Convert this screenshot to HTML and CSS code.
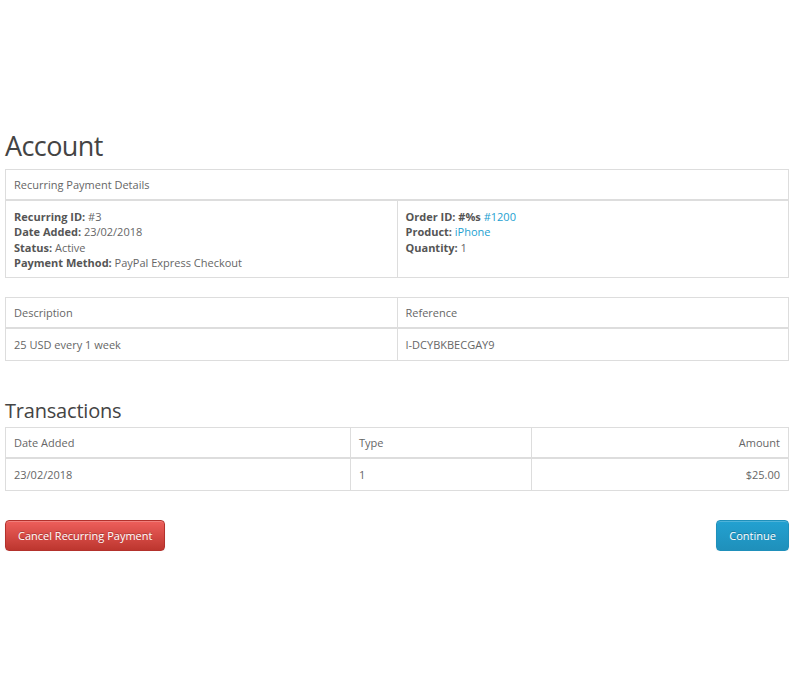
FILE: index.html
```html
<!DOCTYPE html>
<html>
<head>
  <meta http-equiv="content-type" content="text/html; charset=utf-8" />
  <title>Account</title>
  <link rel="stylesheet" href="styles.css">
</head>
<body>
  <div class="container">
    <h1>Account</h1>
    <table class="list first">
      <thead>
        <tr><td colspan="2">Recurring Payment Details</td></tr>
      </thead>
      <tbody>
        <tr class="details">
          <td class="half">
            <b>Recurring ID:</b> #3<br/>
            <b>Date Added:</b> 23/02/2018<br/>
            <b>Status:</b> Active<br/>
            <b>Payment Method:</b> PayPal Express Checkout
          </td>
          <td class="half">
            <b>Order ID: #%s</b> <a href="#">#1200</a><br/>
            <b>Product:</b> <a href="#">iPhone</a><br/>
            <b>Quantity:</b> 1
          </td>
        </tr>
      </tbody>
    </table>

    <table class="list">
      <thead>
        <tr><td class="half">Description</td><td class="half">Reference</td></tr>
      </thead>
      <tbody>
        <tr><td>25 USD every 1 week</td><td>I-DCYBKBECGAY9</td></tr>
      </tbody>
    </table>

    <h2>Transactions</h2>
    <table class="list">
      <thead>
        <tr><td class="c-date">Date Added</td><td class="c-type">Type</td><td class="right">Amount</td></tr>
      </thead>
      <tbody>
        <tr><td>23/02/2018</td><td>1</td><td class="right">$25.00</td></tr>
      </tbody>
    </table>

    <div class="buttons">
      <a href="#" class="btn btn-danger">Cancel Recurring Payment</a>
      <a href="#" class="btn btn-primary">Continue</a>
    </div>
  </div>
</body>
</html>
```

FILE: styles.css
```css
body {
  margin: 0;
  font-family: "Open Sans", sans-serif;
  font-size: 11px;
  color: #666;
  background: #fff;
}
.container {
  width: 784px;
  margin: 0 0 0 5px;
  padding-top: 126px;
}
h1, h2 {
  font-weight: normal;
  color: #444;
  margin: 0;
}
h1 {
  font-size: 27px;
  letter-spacing: -0.6px;
  line-height: 40px;
  margin-bottom: 3px;
}
h2 {
  font-size: 20px;
  letter-spacing: -0.2px;
  line-height: 28px;
  margin-top: 36px;
  margin-bottom: 2px;
}
a {
  color: #23a1d1;
  text-decoration: none;
}
b {
  color: #555;
}
table.list {
  width: 100%;
  border-collapse: collapse;
  margin-bottom: 20px;
  table-layout: fixed;
}
table.list.first {
  margin-bottom: 19px;
}
table.list td {
  border: 1px solid #ddd;
  padding: 7px 8px;
  line-height: 16px;
  vertical-align: top;
}
table.list thead td {
  border-bottom-width: 2px;
  padding-bottom: 6px;
}
table.list tbody td {
  padding: 8px 8px 7px;
  line-height: 16px;
}
table.list tr.details td {
  padding: 8px 8px 7px;
  line-height: 15.25px;
}
.half {
  width: 50%;
}
.c-date {
  width: 328px;
}
.c-type {
  width: 164px;
}
.right {
  text-align: right;
}
.buttons {
  display: flex;
  justify-content: space-between;
  margin-top: 29px;
}
.btn {
  display: inline-block;
  font-size: 11px;
  line-height: 17px;
  padding: 6px 12px;
  border-radius: 4px;
  color: #fff;
  text-shadow: 0 -1px 0 rgba(0, 0, 0, 0.25);
  box-shadow: inset 0 1px 0 rgba(255, 255, 255, 0.2), 0 1px 2px rgba(0, 0, 0, 0.05);
}
.btn-danger {
  background: linear-gradient(#ee5f5b, #bd362f);
  border: 1px solid #b3312c;
}
.btn-primary {
  background: linear-gradient(#23a1d1, #1f90bb);
  border: 1px solid #1f90bb;
}
```
